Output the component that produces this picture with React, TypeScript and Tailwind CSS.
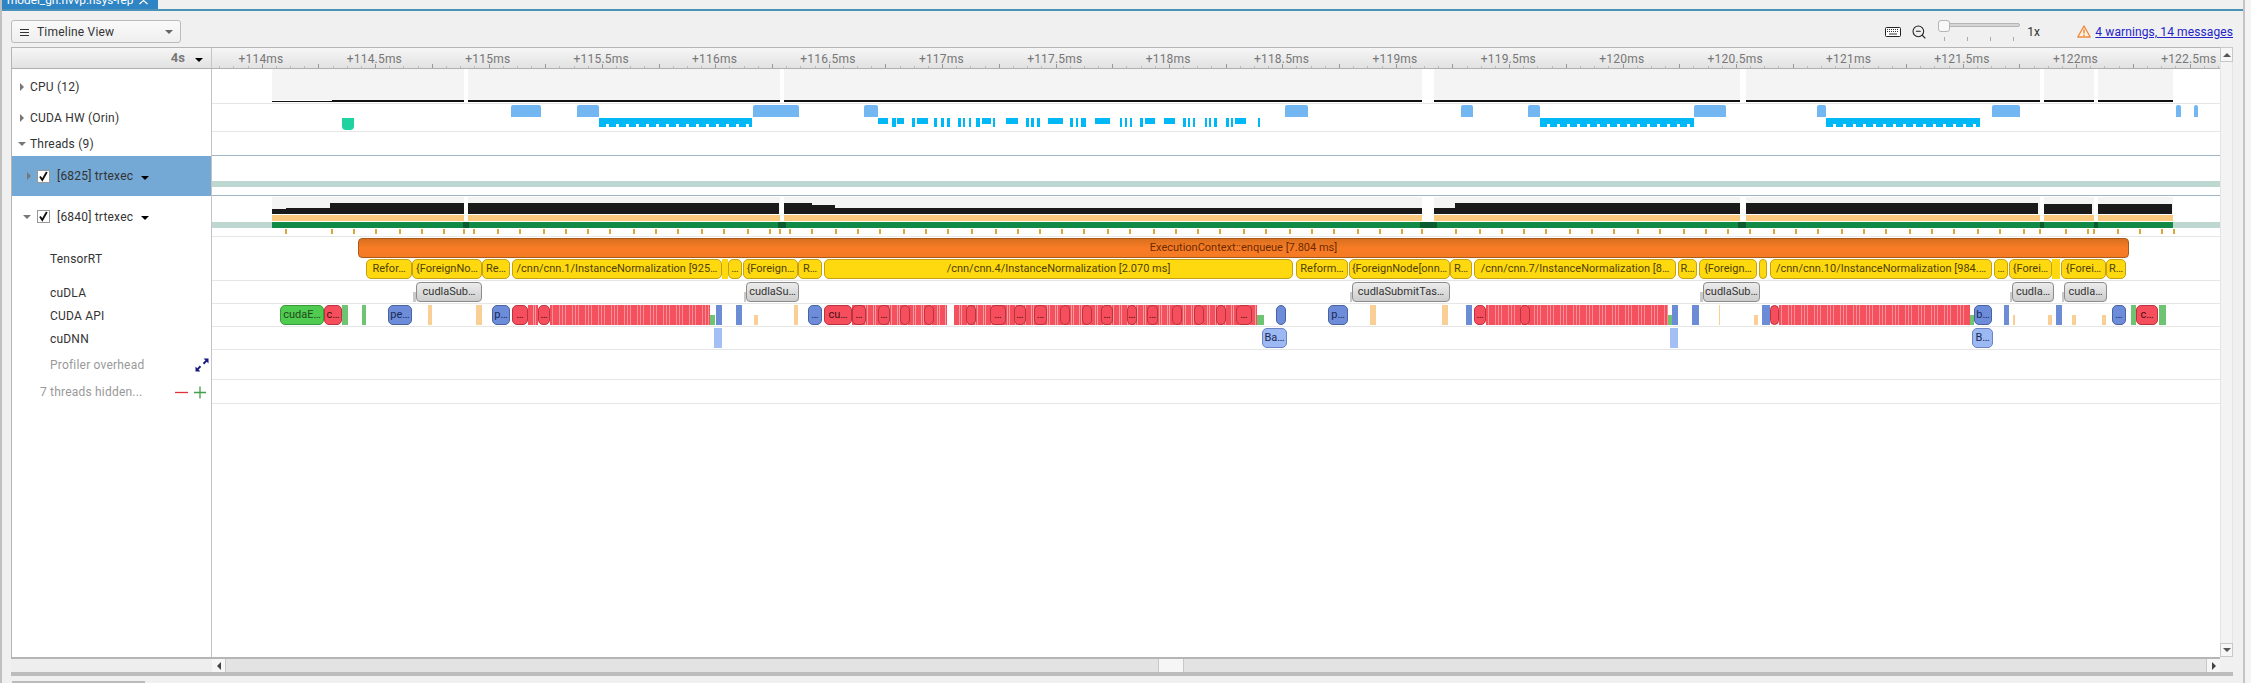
import { ZoomOut } from "lucide-react";
import type { ReactNode } from "react";

// every x below is a page pixel, the timeline column starts at 212
const X0 = 212;

const barStyles: Record<string, string> = {
  orange: "rounded-[4px] border border-[#a85a18] bg-gradient-to-b from-[#d9701f] via-[#f97c25] to-[#f47a24] text-[#6b2a00]",
  yellow: "rounded-[5px] border border-[#c4a012] bg-[#ffd90f] text-[#4f4200]",
  gray: "rounded-[4px] border border-[#8c8c8c] bg-gradient-to-b from-[#ececec] to-[#cdcdcd] text-[#333]",
  green: "rounded-[5px] border border-[#379a3c] bg-[#4fcb4f] text-[#1f4a1f]",
  red: "rounded-[5px] border border-[#b9343f] bg-[#f64e5c] text-[#4a1015]",
  blue: "rounded-[5px] border border-[#4a639f] bg-[#6d8cda] text-[#1b2b55]",
  sky: "rounded-[5px] border border-[#6a84c4] bg-[#9db9f4] text-[#1b2b55]",
  stripes:
    "bg-[repeating-linear-gradient(90deg,#f4505e_0,#f4505e_5px,#f79aa2_5px,#f79aa2_6px,#f4505e_6px,#f4505e_7px,#f79aa2_7px,#f79aa2_8px)]",
  fine: "bg-[repeating-linear-gradient(90deg,#f4505e_0,#f4505e_2px,#f88f98_2px,#f88f98_3px,#f4505e_3px,#f4505e_9px,#f88f98_9px,#f88f98_10px,#f4505e_10px,#f4505e_12px,#f88f98_12px,#f88f98_13px)]",
  yellowStrip: "bg-[#ffd90f]",
  greenStrip: "bg-[#6fc474]",
  blueStrip: "bg-[#6d8cd6]",
  skyStrip: "bg-[#a3bff5]",
  peach: "bg-[#f9cf96]",
  mark: "bg-[#c9c9c9]",
};

type Ev = [number, number, string, string?, boolean?];

function Bar({ ev, top = "top-[1px] h-[20px]" }: { ev: Ev; top?: string }) {
  const [a, b, kind, label, low] = ev;
  return (
    <div
      className={`absolute flex items-center justify-center overflow-hidden whitespace-nowrap text-[11px] ${low ? "top-[11px] h-[10px]" : top} ${barStyles[kind]}`}
      style={{ left: a - X0, width: b - a }}
    >
      {label}
    </div>
  );
}

const enqueue: Ev[] = [[358, 2129, "orange", "ExecutionContext::enqueue [7.804 ms]"]];

const nodes: Ev[] = [
  [366, 412, "yellow", "Refor…"],
  [412, 482, "yellow", "{ForeignNo…"],
  [482, 510, "yellow", "Re…"],
  [512, 722, "yellow", "/cnn/cnn.1/InstanceNormalization [925…"],
  [722, 728, "yellowStrip"],
  [728, 742, "yellow", "…"],
  [743, 798, "yellow", "{Foreign…"],
  [798, 822, "yellow", "R…"],
  [824, 1293, "yellow", "/cnn/cnn.4/InstanceNormalization [2.070 ms]"],
  [1296, 1348, "yellow", "Reform…"],
  [1349, 1450, "yellow", "{ForeignNode[onn…"],
  [1450, 1472, "yellow", "R…"],
  [1474, 1676, "yellow", "/cnn/cnn.7/InstanceNormalization [8…"],
  [1678, 1697, "yellow", "R…"],
  [1699, 1757, "yellow", "{Foreign…"],
  [1759, 1767, "yellow"],
  [1770, 1992, "yellow", "/cnn/cnn.10/InstanceNormalization [984.…"],
  [1994, 2008, "yellow", "…"],
  [2009, 2052, "yellow", "{Forei…"],
  [2052, 2060, "yellowStrip"],
  [2061, 2106, "yellow", "{Forei…"],
  [2106, 2126, "yellow", "R…"],
];

const dla: Ev[] = [
  [413, 416, "mark", undefined, true],
  [416, 482, "gray", "cudlaSub…"],
  [744, 746, "mark", undefined, true],
  [746, 799, "gray", "cudlaSu…"],
  [1350, 1352, "mark", undefined, true],
  [1352, 1450, "gray", "cudlaSubmitTas…"],
  [1700, 1703, "mark", undefined, true],
  [1703, 1760, "gray", "cudlaSub…"],
  [2010, 2012, "mark", undefined, true],
  [2012, 2054, "gray", "cudla…"],
  [2062, 2064, "mark", undefined, true],
  [2064, 2107, "gray", "cudla…"],
];

const api: Ev[] = [
  [280, 324, "green", "cudaE…"],
  [324, 342, "red", "c…"],
  [342, 348, "greenStrip"],
  [362, 366, "greenStrip"],
  [388, 412, "blue", "pe…"],
  [428, 432, "peach"],
  [476, 482, "peach"],
  [492, 510, "blue", "p…"],
  [528, 538, "stripes"],
  [550, 710, "fine"],
  [512, 528, "red", "…"],
  [538, 550, "red", "…"],
  [710, 715, "greenStrip", undefined, true],
  [716, 722, "blueStrip"],
  [736, 742, "blueStrip"],
  [754, 758, "peach", undefined, true],
  [794, 798, "peach"],
  [808, 822, "blue", "…"],
  [852, 947, "stripes"],
  [954, 1257, "stripes"],
  [824, 852, "red", "cu…"],
  [852, 866, "red", "…"],
  [878, 890, "red", "…"],
  [900, 910, "red"],
  [924, 934, "red"],
  [966, 976, "red"],
  [990, 1006, "red", "…"],
  [1014, 1026, "red", "…"],
  [1034, 1047, "red", "…"],
  [1060, 1070, "red"],
  [1082, 1092, "red"],
  [1101, 1113, "red", "…"],
  [1127, 1137, "red", "…"],
  [1147, 1158, "red", "…"],
  [1172, 1182, "red"],
  [1194, 1204, "red"],
  [1216, 1226, "red"],
  [1236, 1252, "red", "…"],
  [1257, 1264, "greenStrip", undefined, true],
  [1276, 1286, "blue"],
  [1328, 1348, "blue", "p…"],
  [1370, 1376, "peach"],
  [1442, 1448, "peach"],
  [1466, 1472, "blueStrip"],
  [1486, 1668, "fine"],
  [1474, 1486, "red", "…"],
  [1520, 1530, "red"],
  [1668, 1672, "greenStrip", undefined, true],
  [1672, 1678, "blueStrip"],
  [1692, 1699, "blueStrip"],
  [1719, 1720, "peach"],
  [1754, 1758, "peach", undefined, true],
  [1762, 1770, "blueStrip"],
  [1779, 1970, "fine"],
  [1770, 1779, "red"],
  [1970, 1974, "greenStrip", undefined, true],
  [1974, 1992, "blue", "b…"],
  [2004, 2009, "blueStrip"],
  [2013, 2015, "peach", undefined, true],
  [2048, 2052, "peach", undefined, true],
  [2056, 2062, "blueStrip"],
  [2072, 2076, "peach", undefined, true],
  [2102, 2106, "peach", undefined, true],
  [2112, 2126, "blue", "…"],
  [2131, 2136, "greenStrip"],
  [2136, 2158, "red", "c…"],
  [2159, 2166, "greenStrip"],
];

const dnn: Ev[] = [
  [714, 722, "skyStrip"],
  [1262, 1287, "sky", "Ba…"],
  [1670, 1678, "skyStrip"],
  [1972, 1993, "sky", "B…"],
];

const segments = [
  [272, 464],
  [468, 780],
  [784, 1422],
  [1434, 1740],
  [1746, 2040],
  [2044, 2094],
  [2098, 2173],
];

// [from, to, top of the black profile inside the row]
const profile = [
  [272, 286, 13],
  [286, 330, 12],
  [330, 464, 7],
  [468, 779, 7],
  [784, 812, 7],
  [812, 835, 9],
  [835, 1422, 12],
  [1434, 1455, 12],
  [1455, 1740, 7],
  [1746, 2038, 7],
  [2044, 2092, 8],
  [2098, 2172, 8],
];

const darkGaps = [
  [463, 469],
  [778, 786],
  [1420, 1437],
  [1738, 1746],
  [2040, 2044],
  [2094, 2098],
];

const ticks = [
  285, 331, 353, 375, 399, 421, 443, 463, 473, 497, 519, 543, 565, 587, 609, 633, 655, 677, 701, 723, 747, 769, 779,
  789, 811, 835, 857, 879, 903, 925, 947, 971, 995, 1017, 1039, 1061, 1083, 1107, 1129, 1153, 1175, 1197, 1219, 1243,
  1265, 1289, 1311, 1333, 1357, 1379, 1401, 1421, 1455, 1479, 1501, 1523, 1545, 1569, 1591, 1613, 1637, 1659, 1683,
  1705, 1727, 1749, 1773, 1795, 1817, 1841, 1863, 1885, 1909, 1931, 1953, 1977, 1999, 2023, 2039, 2065, 2087, 2093,
  2117, 2139, 2161, 2173,
];

const hwBlocks = [
  [511, 541],
  [577, 599],
  [753, 799],
  [864, 878],
  [1285, 1308],
  [1461, 1473],
  [1528, 1540],
  [1694, 1726],
  [1817, 1826],
  [1992, 2020],
  [2176, 2181],
  [2194, 2198],
];

const hwRuns = [
  [599, 752],
  [1540, 1694],
  [1826, 1980],
];

const hwPieces = [
  [878, 888], [892, 896], [897, 904], [912, 915], [917, 928], [934, 937], [941, 944], [947, 950], [958, 961], [963, 965],
  [969, 971], [976, 980], [982, 991], [993, 995], [1006, 1018], [1026, 1029], [1031, 1034], [1037, 1040], [1048, 1063],
  [1070, 1073], [1076, 1078], [1081, 1086], [1095, 1110], [1120, 1122], [1125, 1127], [1130, 1132], [1140, 1143],
  [1145, 1155], [1164, 1175], [1183, 1186], [1188, 1190], [1193, 1195], [1205, 1207], [1209, 1211], [1214, 1217],
  [1226, 1229], [1231, 1233], [1235, 1246], [1258, 1260],
];

const axisLabels = Array.from({ length: 18 }, (_, i) => ({
  text: `+${114 + i / 2}ms`,
  x: 261 + 113.4 * i,
}));

function Caret({ className }: { className: string }) {
  return <span className={`inline-block h-0 w-0 ${className}`} />;
}

const caretDown = "border-x-[4px] border-t-[4px] border-x-transparent border-t-black";
const treeRight = "border-y-[4px] border-l-[4px] border-y-transparent border-l-[#777]";
const treeDown = "border-x-[4px] border-t-[4px] border-x-transparent border-t-[#777]";

function Check() {
  return (
    <span className="flex h-[13px] w-[13px] items-center justify-center border border-[#999] bg-white">
      <svg width="11" height="11" viewBox="0 0 11 11" fill="none" stroke="#111" strokeWidth="1.9">
        <path d="M2 5.5 L4.3 9 L8.8 1" />
      </svg>
    </span>
  );
}

function Row({
  height,
  left,
  leftClass = "",
  lineClass = "border-[#e6e6e6]",
  children,
}: {
  height: string;
  left?: ReactNode;
  leftClass?: string;
  lineClass?: string;
  children?: ReactNode;
}) {
  return (
    <div className={`flex ${height}`}>
      <div className={`flex w-[200px] shrink-0 items-center border-r border-[#c4c4c4] text-[12px] tracking-[0.2px] ${leftClass}`}>
        {left}
      </div>
      <div className={`relative flex-1 overflow-hidden border-b ${lineClass}`}>{children}</div>
    </div>
  );
}

function TreeLabel({ open, text }: { open?: boolean; text: string }) {
  return (
    <>
      <span className="flex w-[18px] justify-center pl-[2px]">
        <Caret className={open ? treeDown : treeRight} />
      </span>
      <span className="text-[#333]">{text}</span>
    </>
  );
}

function ThreadLabel({ open, text }: { open?: boolean; text: string }) {
  return (
    <>
      <span className="flex w-[25px] justify-end pr-[6px]">
        <Caret className={open ? treeDown : treeRight} />
      </span>
      <Check />
      <span className="ml-[7px] text-[#333]">{text}</span>
      <Caret className={`ml-[8px] mt-[3px] ${caretDown}`} />
    </>
  );
}

function Keyboard() {
  return (
    <svg width="16" height="10" viewBox="0 0 16 10" fill="none">
      <rect x="0.5" y="0.5" width="15" height="9" rx="1" stroke="#222" fill="#fff" />
      <path d="M2 2.5h12M2 4.5h12" stroke="#333" strokeDasharray="1 1" />
      <path d="M4 7h8" stroke="#333" />
    </svg>
  );
}

function Warn() {
  return (
    <svg width="14" height="13" viewBox="0 0 14 13" fill="none">
      <path d="M7 1 L13.2 12 H0.8 Z" stroke="#f08a3c" strokeWidth="1.4" strokeLinejoin="round" fill="#fff3e6" />
      <path d="M7 4.5v4M7 9.5v1.4" stroke="#e8762a" strokeWidth="1.3" />
    </svg>
  );
}

function Expand() {
  return (
    <svg width="14" height="14" viewBox="0 0 14 14" fill="#1a1a80">
      <path d="M13.5 0.5 v5 l-1.7 -1.7 -2.6 2.6 -1.4 -1.4 2.6 -2.6 -1.7 -1.9 z" />
      <path d="M0.5 13.5 v-5 l1.7 1.7 2.6 -2.6 1.4 1.4 -2.6 2.6 1.7 1.9 z" />
    </svg>
  );
}

export default function App() {
  return (
    <div className="flex h-[683px] w-[2251px] overflow-hidden bg-[#f0f0f0] font-[Roboto,sans-serif] text-[#333]">
      <div className="w-[2px] shrink-0 bg-[#c0c0c0]" />

      <div className="flex w-[2241px] shrink-0 flex-col">
        {/* tab strip, cut off by the top of the shot */}
        <div className="h-[9px] overflow-hidden bg-[#f0f0f0]">
          <div className="flex h-[9px] w-[156px] items-start justify-between bg-[#2f85c4] pl-[5px] pr-[10px] text-white">
            <span className="-mt-[7px] whitespace-nowrap text-[11.8px] leading-[14px]">model_gn.nvvp.nsys-rep</span>
            <svg className="-mt-[2px] shrink-0" width="9" height="8" viewBox="0 0 9 8" stroke="#fff" strokeWidth="1.2">
              <path d="M0.5 -1 L8.5 6 M8.5 -1 L0.5 6" />
            </svg>
          </div>
        </div>
        <div className="h-[2px] bg-[#4b92b8]" />

        {/* toolbar */}
        <div className="flex h-[36px] items-start pl-[9px] pr-[10px] pt-[9px]">
          <div className="flex h-[23px] w-[170px] items-center rounded-[3px] border border-[#bbb] bg-gradient-to-b from-[#fafafa] to-[#efefef] pl-[8px] pr-[7px] text-[12px] tracking-[0.2px]">
            <svg width="10" height="8" viewBox="0 0 10 8" stroke="#333" strokeWidth="1">
              <path d="M0 1.5h9M0 4.5h9M0 7.5h9" />
            </svg>
            <span className="ml-[7px] text-[#333]">Timeline View</span>
            <Caret className="ml-auto border-x-[4px] border-t-[4px] border-x-transparent border-t-[#666]" />
          </div>

          <div className="ml-auto flex h-[23px] items-center">
            <Keyboard />
            <ZoomOut className="ml-[10px] h-[16px] w-[16px] text-[#222]" strokeWidth={1.6} />
            <div className="relative ml-[11px] h-[23px] w-[82px]">
              <div className="absolute left-0 right-0 top-[3px] h-[4px] rounded-full border border-[#b5b5b5] bg-[#d5d5d5]" />
              <div className="absolute left-0 top-0 h-[12px] w-[12px] rounded-[3px] border border-[#b5b5b5] bg-[#f8f8f8]" />
              <div className="absolute left-[6px] right-[6px] top-[17px] flex justify-between">
                <span className="h-[4px] w-px bg-[#aaa]" />
                <span className="h-[4px] w-px bg-[#aaa]" />
                <span className="h-[4px] w-px bg-[#aaa]" />
                <span className="h-[4px] w-px bg-[#aaa]" />
              </div>
            </div>
            <span className="ml-[7px] w-[14px] text-[12px] text-[#333]">1x</span>
            <span className="ml-[36px]">
              <Warn />
            </span>
            <a className="ml-[4px] text-[12px] tracking-[0.1px] text-[#2323c8] underline">4 warnings, 14 messages</a>
          </div>
        </div>

        {/* table */}
        <div className="ml-[9px] flex h-[629px] w-[2222px] shrink-0 flex-col">
          <div className="flex min-h-0 flex-1">
            <div className="flex w-[2209px] flex-col border-l border-t border-[#b5b5b5] bg-white">
              <div className="flex h-[21px] shrink-0 border-b border-[#b0b0b0] bg-gradient-to-b from-[#f6f6f6] to-[#e2e2e2]">
                <div className="flex w-[200px] shrink-0 items-center justify-end border-r border-[#c4c4c4] pr-[8px]">
                  <span className="text-[13px] font-bold text-[#777]">4s</span>
                  <Caret className={`ml-[10px] mt-[3px] ${caretDown}`} />
                </div>
                <div className="relative flex-1 overflow-hidden">
                  {axisLabels.map((l) => (
                    <span
                      key={l.text}
                      className="absolute top-[2px] -translate-x-1/2 whitespace-nowrap text-[12px] tracking-[0.2px] text-[#777]"
                      style={{ left: l.x - X0 }}
                    >
                      {l.text}
                    </span>
                  ))}
                  {Array.from({ length: 146 }, (_, i) => (
                    <span
                      key={i}
                      className={`absolute bottom-0 w-px ${(i - 3) % 4 === 0 ? "h-[4px] bg-[#999]" : "h-[2px] bg-[#bbb]"}`}
                      style={{ left: 261.7 - X0 + (i - 3) * 14.175 }}
                    />
                  ))}
                </div>
              </div>

              <Row height="h-[35px]" left={<TreeLabel text="CPU (12)" />}>
                {segments.map(([a, b]) => (
                  <div key={a} className="absolute top-0 h-[31px] bg-[#f4f4f4]" style={{ left: a - X0, width: b - a }} />
                ))}
                {segments.map(([a, b]) => (
                  <div key={a} className="absolute top-[31px] h-[2px] bg-[#111]" style={{ left: a - X0, width: b - a }} />
                ))}
                <div className="absolute top-[31px] h-px bg-white" style={{ left: 272 - X0, width: 60 }} />
              </Row>

              <Row height="h-[28px]" left={<TreeLabel text="CUDA HW (Orin)" />}>
                {hwBlocks.map(([a, b]) => (
                  <div key={a} className="absolute top-[1px] h-[12px] rounded-t-[2px] bg-[#72b6f2]" style={{ left: a - X0, width: b - a }} />
                ))}
                {hwRuns.map(([a, b]) => (
                  <div key={a} className="absolute top-[14px] h-[9px]" style={{ left: a - X0, width: b - a }}>
                    <div className="h-[6px] bg-[#00b8f6]" />
                    <div className="h-[3px] bg-[repeating-linear-gradient(90deg,#00b8f6_0,#00b8f6_7px,transparent_7px,transparent_10px)]" />
                  </div>
                ))}
                {hwPieces.map(([a, b]) => (
                  <div
                    key={a}
                    className={`absolute top-[14px] bg-[#00b8f6] ${b - a > 6 ? "h-[6px]" : "h-[9px]"}`}
                    style={{ left: a - X0, width: b - a }}
                  />
                ))}
                <div className="absolute top-[14px] h-[12px] w-[12px] rounded-b-[4px] bg-[#1ed3a0]" style={{ left: 342 - X0 }} />
              </Row>

              <Row height="h-[24px]" lineClass="border-[#9fb4c4]" left={<TreeLabel open text="Threads (9)" />} />

              <Row
                height="h-[40px]"
                lineClass="border-[#9fb4c4]"
                leftClass="bg-[#74a8d5]"
                left={<ThreadLabel text="[6825] trtexec" />}
              >
                <div className="absolute left-0 right-0 top-[25px] h-[6px] bg-[#bed8d1]" />
              </Row>

              <Row height="h-[41px]" left={<ThreadLabel open text="[6840] trtexec" />}>
                {segments.map(([a, b]) => (
                  <div key={a} className="absolute top-[1px] h-[17px] bg-[#f4f4f4]" style={{ left: a - X0, width: b - a }} />
                ))}
                {profile.map(([a, b, t]) => (
                  <div key={a} className="absolute bg-[#1a1a1a]" style={{ left: a - X0, width: b - a, top: t, height: 18 - t }} />
                ))}
                {segments.map(([a, b]) => (
                  <div key={a} className="absolute top-[19px] h-[6px] bg-[#fbc97e]" style={{ left: a - X0, width: b - a }} />
                ))}
                <div className="absolute left-0 top-[26px] h-[6px] w-full bg-[#bed8d1]" />
                <div className="absolute top-[26px] h-[6px] bg-[#118a45]" style={{ left: 272 - X0, width: 1901 }} />
                {darkGaps.map(([a, b]) => (
                  <div key={a} className="absolute top-[26px] h-[6px] bg-[#0b5c30]" style={{ left: a - X0, width: b - a }} />
                ))}
                {ticks.map((x) => (
                  <div key={x} className="absolute top-[33px] h-[5px] w-[2px] bg-[#d9a83a]" style={{ left: x - X0 }} />
                ))}
              </Row>

              <Row height="h-[44px]" left={<span className="pl-[38px]">TensorRT</span>}>
                {enqueue.map((e) => (
                  <Bar key={e[0]} ev={e} />
                ))}
                {nodes.map((e) => (
                  <Bar key={e[0]} ev={e} top="top-[22px] h-[20px]" />
                ))}
              </Row>

              <Row height="h-[23px]" left={<span className="pl-[38px]">cuDLA</span>}>
                {dla.map((e) => (
                  <Bar key={e[0]} ev={e} />
                ))}
              </Row>

              <Row height="h-[23px]" left={<span className="pl-[38px]">CUDA API</span>}>
                {api.map((e) => (
                  <Bar key={`${e[0]}-${e[2]}`} ev={e} />
                ))}
              </Row>

              <Row height="h-[23px]" left={<span className="pl-[38px]">cuDNN</span>}>
                {dnn.map((e) => (
                  <Bar key={e[0]} ev={e} />
                ))}
              </Row>

              <Row
                height="h-[30px]"
                left={
                  <>
                    <span className="pl-[38px] text-[#999]">Profiler overhead</span>
                    <span className="ml-auto mr-[2px] flex">
                      <Expand />
                    </span>
                  </>
                }
              />

              <Row
                height="h-[24px]"
                left={
                  <>
                    <span className="pl-[28px] text-[#999]">7 threads hidden...</span>
                    <svg className="ml-auto mr-[4px]" width="32" height="13" viewBox="0 0 32 13" strokeWidth="1.3">
                      <path d="M0 6.5h13" stroke="#e0303a" />
                      <path d="M19 6.5h12M25 0.5v12" stroke="#3f9e4a" />
                    </svg>
                  </>
                }
              />

              <div className="flex min-h-0 flex-1">
                <div className="w-[200px] border-r border-[#c4c4c4]" />
              </div>
            </div>

            {/* vertical scrollbar */}
            <div className="flex w-[13px] shrink-0 flex-col">
              <div className="flex h-[15px] items-center justify-center border border-[#c8c8c8] bg-[#f6f6f6]">
                <Caret className="border-x-[4px] border-b-[4px] border-x-transparent border-b-[#555]" />
              </div>
              <div className="flex-1 border-x border-[#e4e4e4] bg-[#f3f3f3]" />
              <div className="flex h-[14px] items-center justify-center border border-[#c8c8c8] bg-[#f6f6f6]">
                <Caret className="border-x-[4px] border-t-[4px] border-x-transparent border-t-[#555]" />
              </div>
            </div>
          </div>

          <div className="h-[2px] w-[2209px] shrink-0 bg-[#b5b5b5]" />

          {/* horizontal scrollbar */}
          <div className="flex h-[13px] w-[2209px] shrink-0">
            <div className="w-[201px] bg-[#eeeeee]" />
            <div className="flex w-[14px] items-center justify-center border-r border-[#c8c8c8] bg-[#f6f6f6]">
              <Caret className="border-y-[4px] border-r-[4px] border-y-transparent border-r-[#444]" />
            </div>
            <div className="flex flex-1 bg-[#e3e3e3]">
              <div className="w-[932px]" />
              <div className="w-[26px] border-x border-[#c8c8c8] bg-[#f6f6f6]" />
            </div>
            <div className="flex w-[14px] items-center justify-center border-l border-[#c8c8c8] bg-[#f6f6f6]">
              <Caret className="border-y-[4px] border-l-[4px] border-y-transparent border-l-[#444]" />
            </div>
          </div>
          <div className="h-[4px] w-[2222px] shrink-0 bg-[#bcbcbc]" />
        </div>

        {/* tab row below, only its top edge is in the shot */}
        <div className="pl-[10px] pt-[5px]">
          <div className="h-[2px] w-[133px] bg-[#bbb]" />
        </div>
      </div>

      <div className="w-[2px] shrink-0 bg-[#c4c4c4]" />
      <div className="flex-1 bg-[#f4f4f4]" />
    </div>
  );
}
